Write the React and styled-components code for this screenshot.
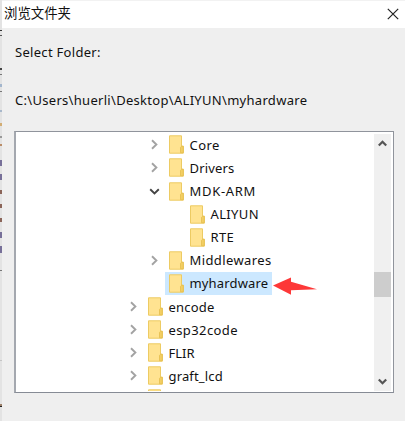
import React from "react";
import styled, { createGlobalStyle } from "styled-components";

const GlobalStyle = createGlobalStyle`
  * { box-sizing: border-box; }
  body { margin: 0; overflow: hidden; background: #efefef; }
`;

const Window = styled.div`
  display: grid;
  grid-template-columns: 2px 403px;
  width: 405px;
  height: 421px;
  overflow: hidden;
  background: #efefef;
  color: #111;
  font: 13px/20px "Noto Sans", "Noto Sans CJK SC", sans-serif;
`;

const Backdrop = styled.div`
  display: flex;
  flex-direction: column;
  background: #e3e3e3;
`;

const Mark = styled.i`
  flex: none;
  height: ${(p) => p.$h}px;
  margin-top: ${(p) => p.$gap}px;
  background: ${(p) => p.$color};
`;

const Dialog = styled.main`
  display: flex;
  flex-direction: column;
  min-width: 0;
`;

const TitleBar = styled.header`
  display: flex;
  justify-content: space-between;
  height: 28px;
  padding: 2px 6px 0 2px;
  background: #fff;
  border-top: 1px solid #f2f2f2;
`;

const Title = styled.h1`
  margin: 0;
  font: 13.4px/18px "Noto Sans CJK SC", sans-serif;
`;

const CloseIcon = styled.svg`
  width: 12px;
  height: 12px;
  margin-top: 5px;
  fill: none;
  stroke: #222;
  stroke-width: 1.2;
`;

const Label = styled.p`
  margin: ${(p) => p.$top}px 0 0 13px;
  height: 20px;
  line-height: 20px;
  white-space: nowrap;
`;

const Fit = styled.span`
  letter-spacing: ${(p) => p.$track || 0}px;
`;

const TreeBox = styled.section`
  display: grid;
  grid-template-columns: 1fr 17px;
  width: 380px;
  height: 262px;
  margin: 21px 0 0 12px;
  padding: 1px 2px 1px 1px;
  background: #fff;
  border: 1px solid #90949c;
  border-left: 2px solid #a4a8af;
  border-bottom-color: #868b95;
`;

const Tree = styled.ul`
  height: 258px;
  margin: 0;
  padding: 0.4px 0 0;
  overflow: hidden;
  list-style: none;
`;

const Row = styled.li`
  display: flex;
  height: 23.1px;
  padding-left: ${(p) => 108.5 + p.$level * 21}px;
`;

const ArrowSlot = styled.span`
  display: flex;
  align-items: center;
  justify-content: center;
  width: 15px;
  height: 23px;
  svg { width: 11px; height: 11px; fill: none; stroke-width: 1.9; }
`;

const Item = styled.span`
  display: flex;
  align-items: center;
  gap: 6px;
  height: 23px;
  margin-left: 3px;
  padding: 0 4px 0 4px;
  white-space: nowrap;
  background: ${(p) => (p.$selected ? "#cce8ff" : "transparent")};
  svg { flex: none; width: 15px; height: 19px; }
`;

const Pointer = styled.svg`
  width: 45px;
  height: 20px;
  margin: 4px 0 0 1px;
  fill: #fd3838;
`;

const ScrollBar = styled.div`
  display: flex;
  flex-direction: column;
  align-items: center;
  height: 257px;
  margin-top: 1px;
  background: #f0f0f0;
`;

const ScrollArrow = styled.svg`
  width: 9px;
  height: 7px;
  margin: ${(p) => p.$top}px 0 0;
  fill: none;
  stroke: #555;
  stroke-width: 2.2;
`;

const Thumb = styled.div`
  width: 17px;
  height: 25px;
  margin-top: 125px;
  background: #cdcdcd;
`;

const Folder = () => (
  <svg viewBox="0 0 15 19">
    <path d="M.5.8h12v10.4h1.8v7H.5z" fill="#ffe391" stroke="#edcb63" />
    <path d="M11.5 17.7v-5.3l1-1.1h1.8v6.4z" fill="#f3cf63" stroke="#e5be4e" strokeWidth=".8" />
  </svg>
);

const Arrow = ({ state }) => (
  <ArrowSlot>
    {state === "closed" && <svg viewBox="0 0 11 11"><path d="M3 1.2 7.4 5.5 3 9.8" stroke="#a3a3a3" /></svg>}
    {state === "open" && <svg viewBox="0 0 11 11"><path d="M1.2 3.2 5.5 7.4 9.8 3.2" stroke="#444" /></svg>}
  </ArrowSlot>
);

const rows = [
  { name: "Core", level: 1, state: "closed", track: 0.45 },
  { name: "Drivers", level: 1, state: "closed", track: 0.15 },
  { name: "MDK-ARM", level: 1, state: "open", track: 0.7 },
  { name: "ALIYUN", level: 2, track: 0.35 },
  { name: "RTE", level: 2, track: 0.3 },
  { name: "Middlewares", level: 1, state: "closed", track: 0.4 },
  { name: "myhardware", level: 1, selected: true, track: 0.16 },
  { name: "encode", level: 0, state: "closed", track: 0.2 },
  { name: "esp32code", level: 0, state: "closed", track: 0.4 },
  { name: "FLIR", level: 0, state: "closed" },
  { name: "graft_lcd", level: 0, state: "closed", track: 0.15 },
  { name: "", level: 0 },
];

const marks = [
  [30, 1, "#333"], [4, 1, "#555"], [32, 2, "#444"], [4, 1, "#777"],
  [9, 3, "#a3b6cd"], [4, 1, "#777"], [18, 2, "#a8b8cb"], [11, 3, "#d2ad74"],
  [10, 2, "#999"], [6, 2, "#ba8d68"], [14, 6, "#777099"], [8, 6, "#777099"],
  [10, 4, "#8b6559"], [10, 4, "#8b6559"], [10, 4, "#8b6559"],
  [10, 6, "#777099"], [8, 7, "#777099"], [17, 1, "#777"],
  [89, 1, "#c5c5c5"], [43, 2, "#9c7f68"], [0, 1, "#222"],
];

export default function App() {
  return (
    <>
      <GlobalStyle />
      <Window>
        <Backdrop>
          {marks.map(([gap, h, color], i) => <Mark key={i} $gap={gap} $h={h} $color={color} />)}
        </Backdrop>
        <Dialog>
          <TitleBar>
            <Title>浏览文件夹</Title>
            <CloseIcon viewBox="0 0 12 12"><path d="m.8.8 10.4 10.4m0-10.4L.8 11.2" /></CloseIcon>
          </TitleBar>
          <Label $top={14}><Fit $track={0.3}>Select Folder:</Fit></Label>
          <Label $top={28}><Fit $track={0.3}>C:\Users\huerli\Desktop\ALIYUN\myhardware</Fit></Label>
          <TreeBox>
            <Tree>
              {rows.map((row, i) => (
                <Row key={i} $level={row.level}>
                  <Arrow state={row.state} />
                  <Item $selected={row.selected}>
                    <Folder />
                    <Fit $track={row.track}>{row.name}</Fit>
                  </Item>
                  {row.selected && (
                    <Pointer viewBox="0 0 45 20"><path d="M0 9.5 18 1.5v4.3l26 7.4-26 1v4.5z" /></Pointer>
                  )}
                </Row>
              ))}
            </Tree>
            <ScrollBar>
              <ScrollArrow $top={6} viewBox="0 0 9 7"><path d="M.8 5.6 4.5 1.8l3.7 3.8" /></ScrollArrow>
              <Thumb />
              <ScrollArrow $top={81} viewBox="0 0 9 7"><path d="M.8 1.4l3.7 3.8 3.7-3.8" /></ScrollArrow>
            </ScrollBar>
          </TreeBox>
        </Dialog>
      </Window>
    </>
  );
}
